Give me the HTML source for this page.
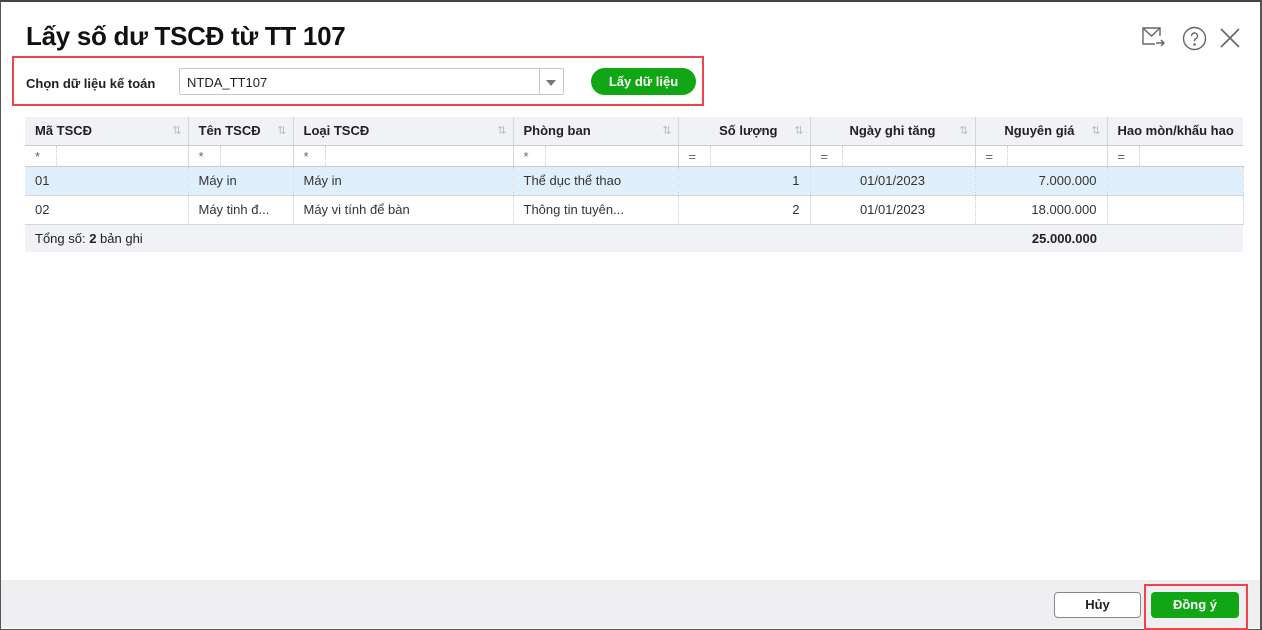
<!DOCTYPE html>
<html><head><meta charset="utf-8"><style>
*{box-sizing:border-box;margin:0;padding:0}
body{width:1262px;height:630px;overflow:hidden;background:#fff;font-family:"Liberation Sans",sans-serif;font-size:13px;color:#212121;position:relative}
.frame{position:absolute;left:0;top:0;width:1262px;height:630px;border:1px solid #555;border-top:2px solid #444;border-right:2px solid #555}
.title{position:absolute;left:26px;top:21px;font-size:26px;font-weight:bold;color:#111;letter-spacing:-0.3px}
.abs{position:absolute}
.red{border:2px solid #f0434b}
table{position:absolute;left:25px;top:117px;width:1218px;border-collapse:collapse;table-layout:fixed}
td,th{overflow:hidden;white-space:nowrap;padding:0 10px;font-size:13px}
th{height:28px;background:#f1f2f5;text-align:left;font-weight:bold;border-right:1px solid #d4d6dc;border-bottom:1px solid #c9ccd3;position:relative;color:#212121}
th .s{position:absolute;right:6px;top:7px;color:#bbb;font-size:11px;font-weight:normal}
tr.f td{height:21px;background:#fff;border-right:1px solid #d4d6dc;border-bottom:1px solid #c9ccd3;padding:0;color:#666}
tr.f td span{display:inline-block;width:32px;border-right:1px dotted #ccc;height:20px;line-height:22px;padding-left:10px}
tr.d td{height:29px;border-right:1px dotted #ccc;border-bottom:1px solid #d4d6dc;color:#333}
tr.sel td{background:#e0effc}
tr.t td{height:28px;background:#f1f2f5;border-top:1px solid #c9ccd3}
.r{text-align:right}.c{text-align:center}
</style></head><body>
<div class="frame"></div>
<div class="title">Lấy số dư TSCĐ từ TT 107</div>
<svg class="abs" style="left:1141px;top:26px" width="26" height="24" viewBox="0 0 26 24" fill="none" stroke="#666" stroke-width="1.4"><path d="M19 10V2H2v16h12M2 2l8.5 8L19 2"/><path d="M15 17h8M20 14l3 3-3 3"/></svg>
<svg class="abs" style="left:1182px;top:26px" width="25" height="25" viewBox="0 0 25 25" fill="none" stroke="#666" stroke-width="1.4"><circle cx="12.5" cy="12.5" r="11"/><path d="M9.5 10a3 3 0 1 1 4 2.8c-1 .4-1 1.2-1 2.4"/><circle cx="12.5" cy="18.5" r=".6" fill="#666"/></svg>
<svg class="abs" style="left:1219px;top:27px" width="22" height="22" viewBox="0 0 22 22" stroke="#666" stroke-width="1.6"><path d="M2 2l18 18M20 2L2 20"/></svg>
<div class="abs red" style="left:12px;top:56px;width:692px;height:50px"></div>
<div class="abs" style="left:26px;top:76px;font-weight:bold;font-size:13px">Chọn dữ liệu kế toán</div>
<div class="abs" style="left:179px;top:68px;width:385px;height:27px;border:1px solid #c6c8cc;border-radius:2px;padding:6px 7px;font-size:13px">NTDA_TT107<div class="abs" style="right:0;top:0;width:24px;height:25px;border-left:1px solid #c6c8cc"></div><div class="abs" style="right:7px;top:11px;border:5px solid transparent;border-top:6px solid #777;border-bottom:0"></div></div>
<div class="abs" style="left:591px;top:68px;width:105px;height:27px;border-radius:14px;background:#10a614;color:#fff;font-weight:bold;text-align:center;line-height:27px">Lấy dữ liệu</div>
<table>
<colgroup><col style="width:163px"><col style="width:105px"><col style="width:220px"><col style="width:165px"><col style="width:132px"><col style="width:165px"><col style="width:132px"><col style="width:136px"></colgroup>
<tr><th>Mã TSCĐ<span class="s">⇅</span></th><th>Tên TSCĐ<span class="s">⇅</span></th><th>Loại TSCĐ<span class="s">⇅</span></th><th>Phòng ban<span class="s">⇅</span></th><th class="r" style="padding-right:32px">Số lượng<span class="s">⇅</span></th><th class="c">Ngày ghi tăng<span class="s">⇅</span></th><th class="r" style="padding-right:32px">Nguyên giá<span class="s">⇅</span></th><th style="border-right:0">Hao mòn/khấu hao</th></tr>
<tr class="f"><td><span>*</span></td><td><span>*</span></td><td><span>*</span></td><td><span>*</span></td><td><span>=</span></td><td><span>=</span></td><td><span>=</span></td><td style="border-right:0"><span>=</span></td></tr>
<tr class="d sel"><td>01</td><td>Máy in</td><td>Máy in</td><td>Thể dục thể thao</td><td class="r">1</td><td class="c">01/01/2023</td><td class="r">7.000.000</td><td></td></tr>
<tr class="d"><td>02</td><td>Máy tinh đ...</td><td>Máy vi tính để bàn</td><td>Thông tin tuyên...</td><td class="r">2</td><td class="c">01/01/2023</td><td class="r">18.000.000</td><td></td></tr>
<tr class="t"><td colspan="6">Tổng số: <b>2</b> bản ghi</td><td class="r"><b>25.000.000</b></td><td></td></tr>
</table>
<div class="abs" style="left:1px;top:580px;width:1259px;height:48px;background:#efeff1"></div>
<div class="abs" style="left:1054px;top:592px;width:87px;height:26px;border:1px solid #888;border-radius:4px;background:#fff;text-align:center;line-height:24px;font-weight:bold">Hủy</div>
<div class="abs red" style="left:1144px;top:584px;width:104px;height:46px"></div>
<div class="abs" style="left:1151px;top:592px;width:88px;height:26px;border-radius:4px;background:#10a614;color:#fff;text-align:center;line-height:26px;font-weight:bold">Đồng ý</div>
</body></html>
